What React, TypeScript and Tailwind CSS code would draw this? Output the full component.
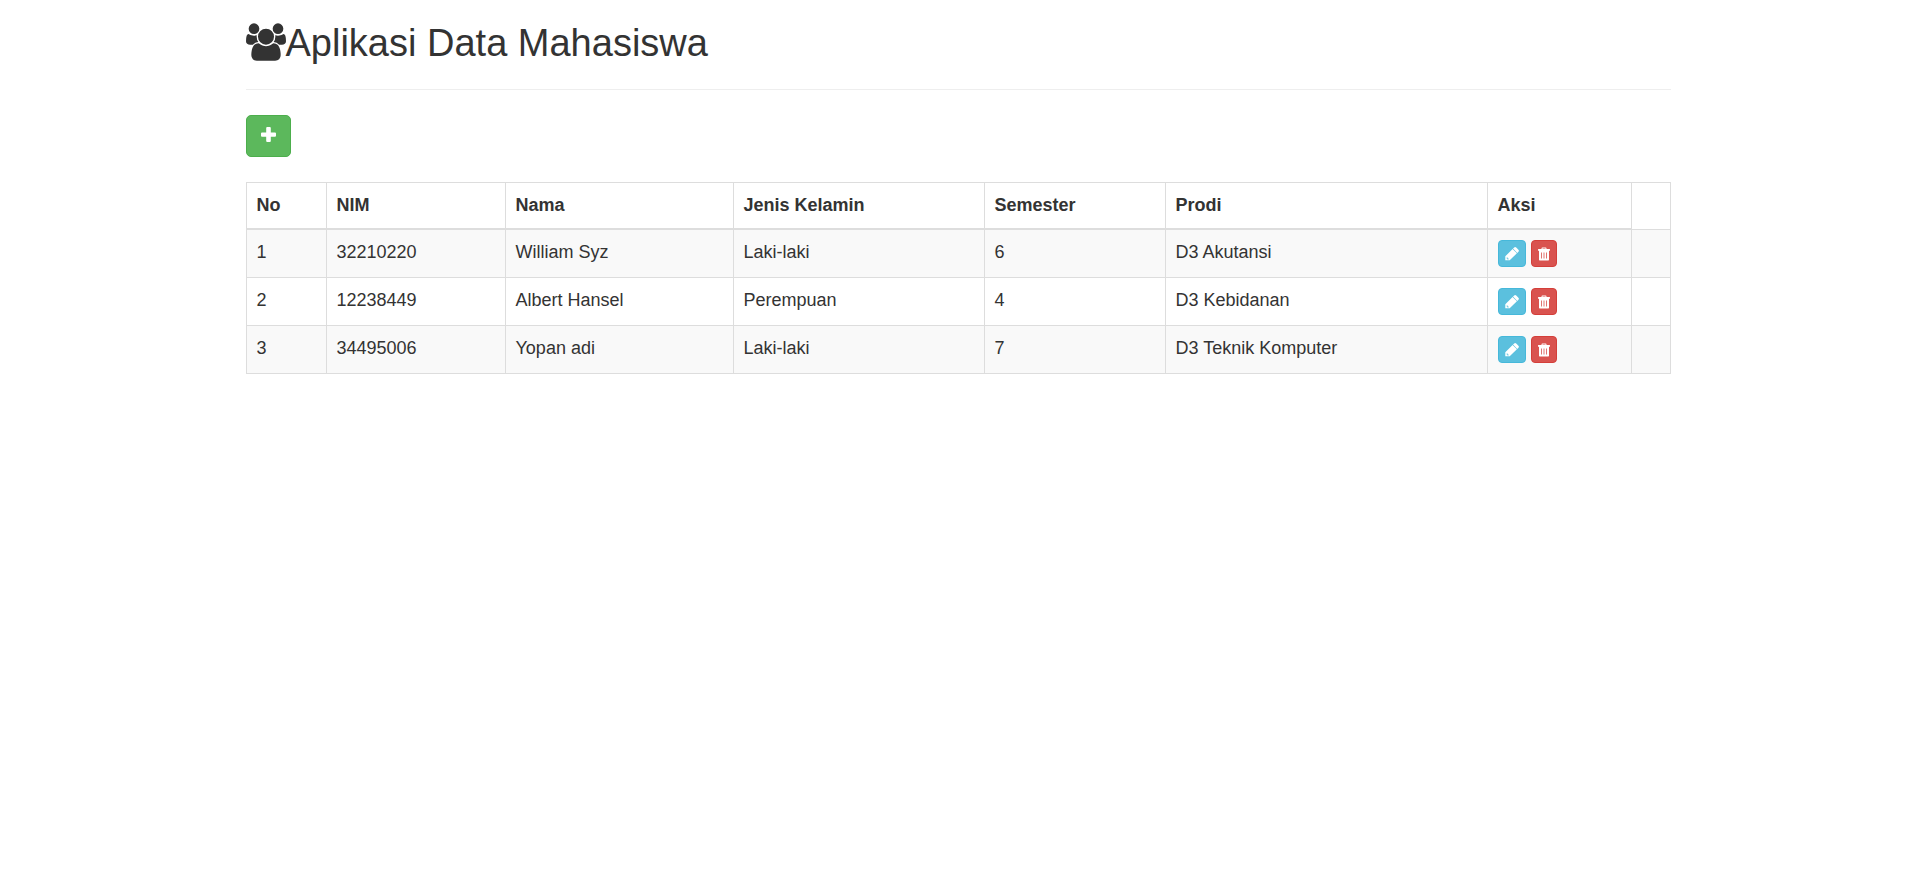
import React from "react";

type Student = {
  nim: string;
  name: string;
  gender: string;
  semester: number;
  program: string;
};

const students: Student[] = [
  { nim: "32210220", name: "William Syz", gender: "Laki-laki", semester: 6, program: "D3 Akutansi" },
  { nim: "12238449", name: "Albert Hansel", gender: "Perempuan", semester: 4, program: "D3 Kebidanan" },
  { nim: "34495006", name: "Yopan adi", gender: "Laki-laki", semester: 7, program: "D3 Teknik Komputer" },
];

const columns = [
  { label: "No", width: "w-[80px]" },
  { label: "NIM", width: "w-[179px]" },
  { label: "Nama", width: "w-[228px]" },
  { label: "Jenis Kelamin", width: "w-[251px]" },
  { label: "Semester", width: "w-[181px]" },
  { label: "Prodi", width: "w-[322px]" },
  { label: "Aksi", width: "w-[144px]" },
];

function UsersIcon() {
  return (
    <svg viewBox="0 0 1920 1792" className="h-[38px] w-10 shrink-0" fill="currentColor" aria-hidden="true">
      <path d="M593 896q-162 5-265 128h-134q-82 0-138-40.500t-56-118.500q0-353 124-353 6 0 43.500 21t97.500 42.500 119 21.500q67 0 133-23-5 37-5 66 0 139 81 256zm1071 637q0 120-73 189.500t-194 69.500h-874q-121 0-194-69.500t-73-189.500q0-53 3.500-103.500t14-109 26.500-108.500 43-97.500 62-81 85.500-53.500 111.500-20q10 0 43 21.500t73 48 107 48 135 21.500 135-21.500 107-48 73-48 43-21.500q61 0 111.500 20t85.500 53.500 62 81 43 97.500 26.500 108.500 14 109 3.500 103.500zm-1024-1277q0 106-75 181t-181 75-181-75-75-181 75-181 181-75 181 75 75 181zm704 384q0 159-112.500 271.500t-271.500 112.500-271.500-112.500-112.500-271.500 112.500-271.500 271.500-112.500 271.500 112.500 112.500 271.500zm576 225q0 78-56 118.500t-138 40.500h-134q-103-123-265-128 81-117 81-256 0-29-5-66 66 23 133 23 59 0 119-21.500t97.500-42.500 43.500-21q124 0 124 353zm-128-609q0 106-75 181t-181 75-181-75-75-181 75-181 181-75 181 75 75 181z" />
    </svg>
  );
}

function PlusIcon() {
  return (
    <svg viewBox="0 0 15 15" className="size-[15px]" fill="currentColor" aria-hidden="true">
      <path d="M6.200 0h2.600a1 1 0 0 1 1 1v4.500H14a1 1 0 0 1 1 1v2.300a1 1 0 0 1-1 1H9.800V14a1 1 0 0 1-1 1H6.200a1 1 0 0 1-1-1V9.800H1a1 1 0 0 1-1-1V6.500a1 1 0 0 1 1-1h4.200V1a1 1 0 0 1 1-1z" />
    </svg>
  );
}

function PencilIcon() {
  return (
    <svg viewBox="0 0 14 14" className="size-[14px]" fill="currentColor" aria-hidden="true">
      <path d="M.3 13.300V9.300L7.600 2l4.300 4.300-7.200 7zM1.600 10.800v.8h.8v.8h.9l.5-.5L2.100 10.300z" fillRule="evenodd" />
      <path d="M8 1.600L9.200.5q1-.9 2 0l2.200 2.200q.9 1 0 2L12.300 5.900z" />
    </svg>
  );
}

function TrashIcon() {
  return (
    <svg viewBox="0 0 12 14" className="h-[14px] w-3" fill="currentColor" aria-hidden="true">
      <path
        fillRule="evenodd"
        d="M3.500 2V1.400Q3.500.5 4.400.5h3.200q.9 0 .9.900V2H11.500q.5 0 .5.500v1.300H11v9q0 .7-.7.700H1.700q-.7 0-.7-.7v-9H0V2.500Q0 2 .5 2zM4.500 2h3v-.5h-3zM3 5.500v6h.8v-6zM5.600 5.500v6h.8v-6zM8.200 5.500v6h.8v-6z"
      />
    </svg>
  );
}

export default function App() {
  return (
    <main className="mx-auto w-full max-w-[1465px] bg-white px-5 font-['Liberation_Sans',Arial,sans-serif] text-lg/[25px] text-[#333]">
      <header className="border-b border-[#eee] pt-[23px] pb-[25px]">
        <h1 className="flex items-start text-[38px]/[41px] font-normal">
          <UsersIcon />
          <span>Aplikasi Data Mahasiswa</span>
        </h1>
      </header>

      <button
        type="button"
        aria-label="Tambah data"
        className="my-[25px] flex h-[42px] w-[45px] cursor-pointer justify-center rounded-[5px] border border-[#4cae4c] bg-[#5cb85c] pt-[11px] text-white"
      >
        <PlusIcon />
      </button>

      <table className="w-full table-fixed border-collapse border border-[#ddd]">
        <thead>
          <tr>
            {columns.map((column) => (
              <th
                key={column.label}
                scope="col"
                className={`${column.width} border border-b-2 border-[#ddd] p-[10px] text-left font-bold`}
              >
                {column.label}
              </th>
            ))}
            <td className="border border-[#ddd] p-[10px]" />
          </tr>
        </thead>
        <tbody>
          {students.map((student, index) => (
            <tr key={student.nim} className="h-12 align-top odd:bg-[#f9f9f9]">
              <td className="border border-[#ddd] px-[10px] pt-[10px]">{index + 1}</td>
              <td className="border border-[#ddd] px-[10px] pt-[10px]">{student.nim}</td>
              <td className="border border-[#ddd] px-[10px] pt-[10px]">{student.name}</td>
              <td className="border border-[#ddd] px-[10px] pt-[10px]">{student.gender}</td>
              <td className="border border-[#ddd] px-[10px] pt-[10px]">{student.semester}</td>
              <td className="border border-[#ddd] px-[10px] pt-[10px]">{student.program}</td>
              <td className="border border-[#ddd] p-[10px]">
                <div className="flex gap-[5px]">
                  <button
                    type="button"
                    aria-label={`Ubah ${student.name}`}
                    className="flex h-[27px] w-7 cursor-pointer items-center justify-center rounded-[4px] border border-[#46b8da] bg-[#5bc0de] text-white"
                  >
                    <PencilIcon />
                  </button>
                  <button
                    type="button"
                    aria-label={`Hapus ${student.name}`}
                    className="flex h-[27px] w-[26px] cursor-pointer items-center justify-center rounded-[4px] border border-[#d43f3a] bg-[#d9534f] text-white"
                  >
                    <TrashIcon />
                  </button>
                </div>
              </td>
              <td className="border border-[#ddd]" />
            </tr>
          ))}
        </tbody>
      </table>
    </main>
  );
}
